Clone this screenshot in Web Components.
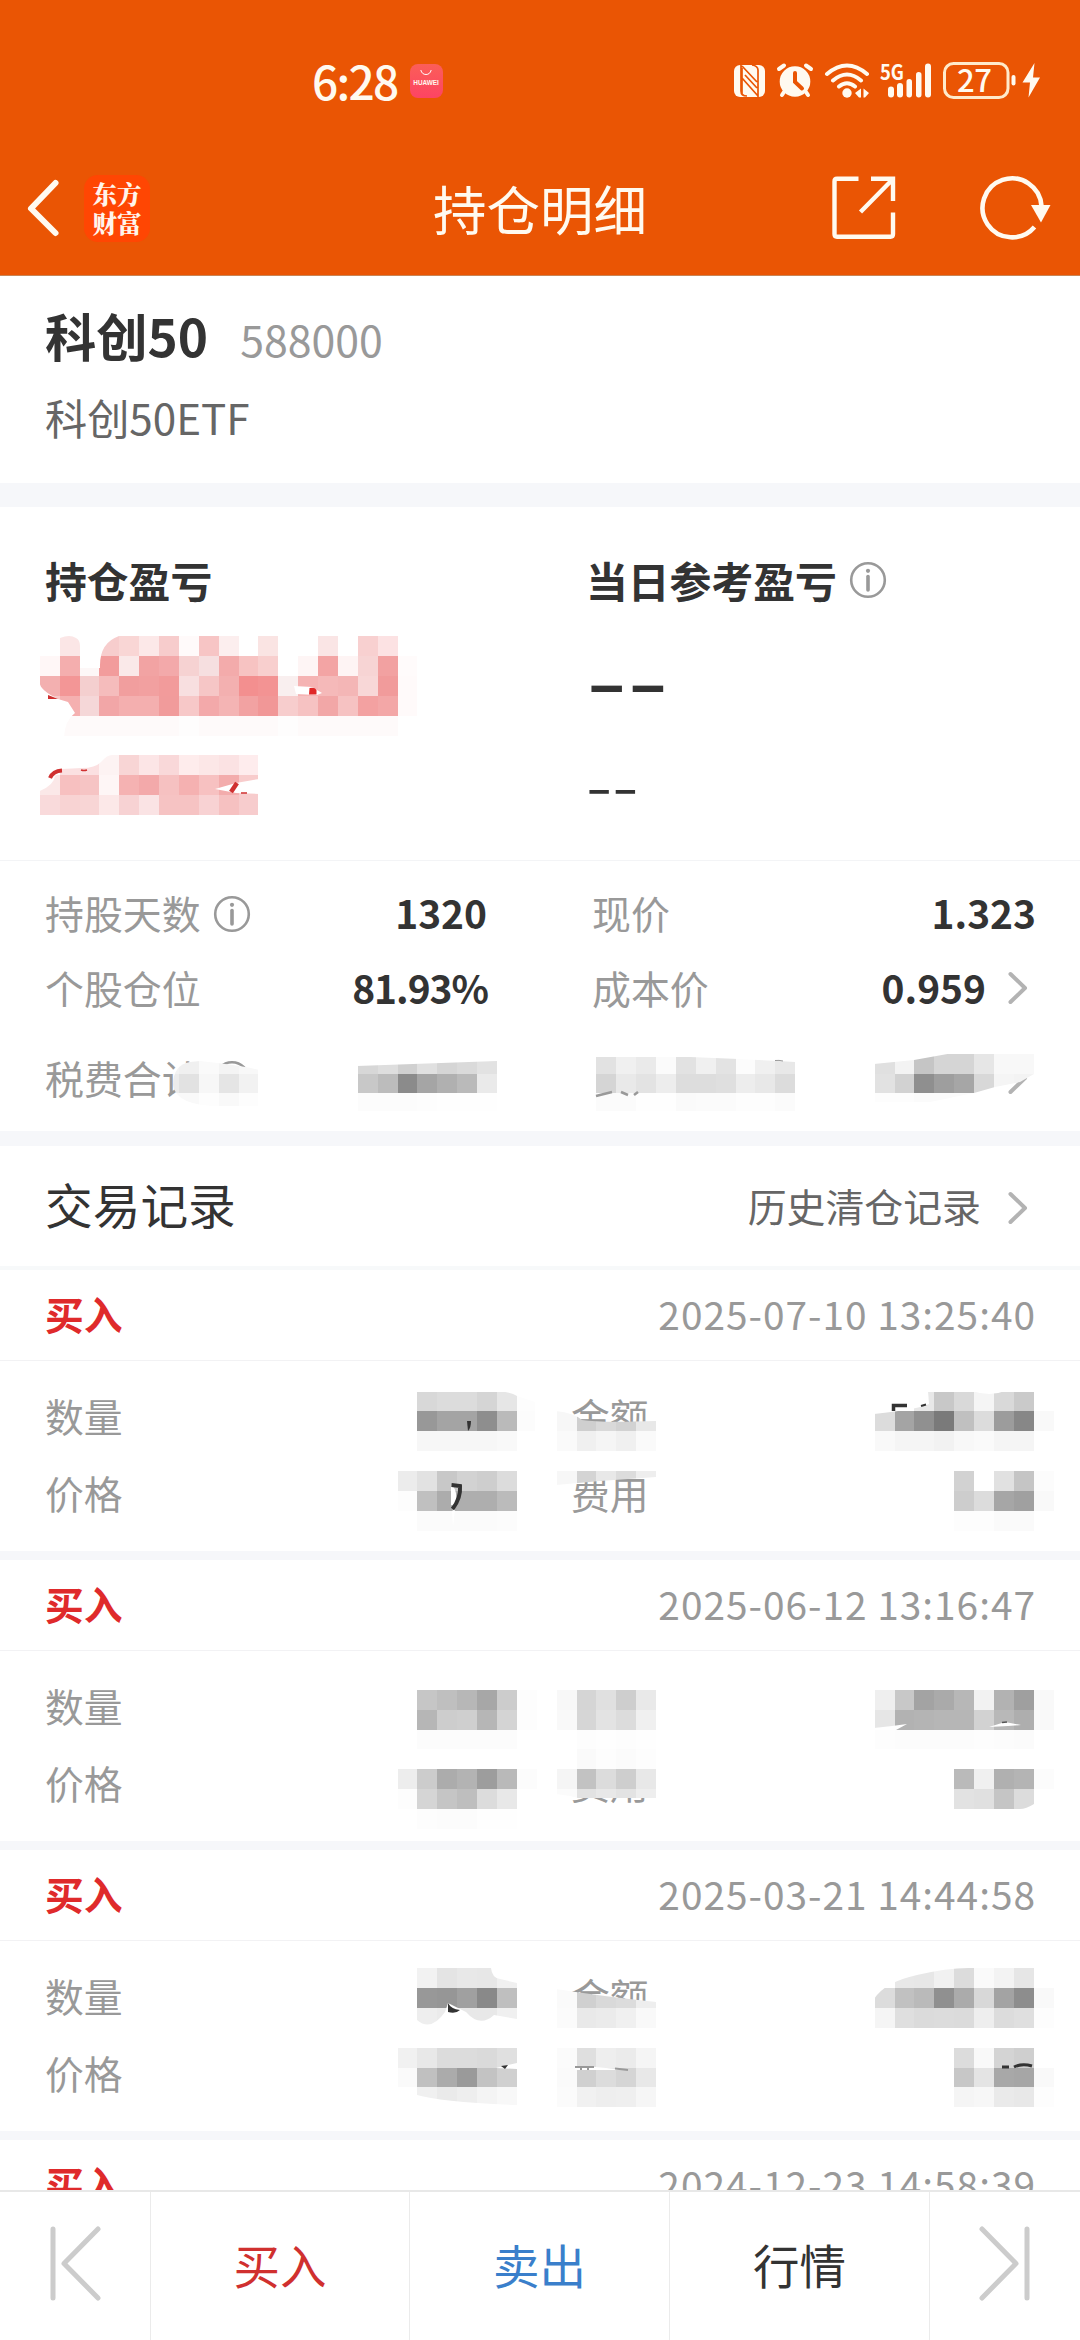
<!DOCTYPE html>
<html lang="zh-CN">
<head>
<meta charset="utf-8">
<title>持仓明细</title>
<style>
  html, body{
    margin: 0;
    background: #fff;
    font-family: "Noto Sans CJK SC", sans-serif;
  }
</style>
</head>
<body>
<position-page></position-page>

<script>
const define = (name, html, setup) => {
  const template = document.createElement('template')
  template.innerHTML = html

  window.customElements.define(name, class extends HTMLElement {
    constructor(){
      super()
      this.attachShadow({mode: 'open'}).appendChild(template.content.cloneNode(true))
    }

    connectedCallback(){
      if (setup) setup(this, this.shadowRoot)
    }
  })
}

define('info-icon', `
  <style>
    :host{ display: block; flex: none; width: 38px; height: 38px; }
    svg{ display: block; }
  </style>
  <svg width="38" height="38" fill="none" stroke="#999" stroke-width="2.6">
    <circle cx="19" cy="19" r="16.8"/>
    <path d="M19 15.5V29" stroke-width="3.6" stroke-linecap="round"/>
    <circle cx="19" cy="9.8" r="2.1" fill="#999" stroke="none"/>
  </svg>
`)

define('more-arrow', `
  <style>
    :host{ display: block; flex: none; width: 20px; height: 36px; }
    svg{ display: block; }
  </style>
  <svg width="20" height="36" fill="none" stroke="#b3b3b3" stroke-width="4" stroke-linecap="round" stroke-linejoin="round">
    <path d="M2.5 4L17 18L2.5 32"/>
  </svg>
`)

define('status-bar', `
  <style>
    :host{ display: flex; align-items: center; height: 110px; padding: 50px 37px 0 312px; box-sizing: border-box; color: #fffaf0; }
    .time{ font-size: 46px; font-weight: 500; line-height: 62px; letter-spacing: -1.7px; height: 62px; }
    .badge{
      display: flex; flex-direction: column; align-items: center;
      width: 33px; height: 34px; margin: 1px 0 0 12px; border-radius: 8px;
      background: linear-gradient(#fb5e58, #fd4463);
      font: bold 6.4px/8px "Liberation Sans", sans-serif;
    }
    .badge svg{ margin: 5px 0 3px; }
    .icons{ margin-left: auto; }
    .icons text{ font-family: "Noto Sans CJK SC", sans-serif; }
  </style>
  <span class="time">6:28</span>
  <span class="badge">
    <svg width="12" height="7" fill="none" stroke="#fff"><path d="M.8 1Q2 5.5 6 5.5T11.2 1"/></svg>
    HUAWEI
  </span>
  <svg class="icons" width="312" height="44" viewBox="730 58 312 44" fill="#fffaf0" stroke="none">
    <rect x="733" y="65" width="31" height="32" rx="6"/>
    <g stroke="#ea5504" fill="none" stroke-width="1.7">
      <path d="M740 64V91Q740 96 746 96M757 98V70Q757 66 751 65M741 66L756 82M741 78L757 96M741 68V94M744 75L756 88"/>
    </g>
    <circle cx="794" cy="81.500" r="15.300"/>
    <g stroke="#fffaf0" stroke-width="4" stroke-linecap="round" fill="none">
      <path d="M778 69L783 65.500M810 69L805 65.500M783 92L781 95M805 92L807 95"/>
    </g>
    <path d="M794 73V82L801 88.500" fill="none" stroke="#ea5504" stroke-width="4" stroke-linecap="round"/>
    <g fill="none" stroke="#fffaf0" stroke-width="4" stroke-linecap="round">
      <path d="M826 74Q846 57 866 74M832 80.500Q846 68.500 860 80.500M838 86.500Q846 80 854 86.500"/>
    </g>
    <circle cx="846" cy="93" r="4.700"/>
    <path d="M860 88.500V97.500H858L854 93ZM862.500 88.500L868 93L864 97.500H862.500Z"/>
    <text x="879" y="80" font-size="21" font-weight="700" textLength="24" lengthAdjust="spacingAndGlyphs">5G</text>
    <rect x="887" y="86.500" width="6" height="11" rx="3"/>
    <rect x="896" y="83" width="6" height="14.500" rx="3"/>
    <rect x="905.500" y="79" width="5.500" height="18.500" rx="2.700"/>
    <rect x="915" y="72" width="5.500" height="25.500" rx="2.700"/>
    <rect x="924" y="63.500" width="6" height="34" rx="3"/>
    <rect x="943.500" y="63.500" width="63.500" height="34" rx="9" fill="none" stroke="#ffeacb" stroke-width="3"/>
    <text x="956" y="91.500" font-size="31" font-weight="500" textLength="35">27</text>
    <rect x="1010.500" y="75" width="4" height="10.500" rx="2"/>
    <path d="M1033.500 63L1021.500 82.500H1029L1027.500 97.500L1039 77.500H1032Z"/>
  </svg>
`)

define('nav-bar', `
  <style>
    :host{ display: grid; grid-template-columns: 1fr auto 1fr; align-items: center; height: 165px; padding: 31px 26px 0; box-sizing: border-box; color: #fffaf0; }
    .side{ display: flex; align-items: center; }
    .side:last-child{ justify-content: flex-end; gap: 84px; }
    .app{
      box-sizing: border-box; width: 66px; height: 67px; padding-top: 4px; margin-left: 23px;
      border-radius: 14px; background: #ff4603; color: #fff5ec;
      font-weight: 900; font-size: 24.5px; line-height: 29.500px; text-align: center;
      font-family: "Noto Serif CJK SC", "Noto Sans CJK SC", sans-serif;
    }
    h1{ margin: 0; font-weight: 400; font-size: 53.5px; line-height: 70px; }
    svg{ display: block; }
  </style>
  <div class="side">
    <svg width="35" height="60" fill="none" stroke="#fffaf0" stroke-width="6" stroke-linecap="round" stroke-linejoin="round"><path d="M29.500 5L5 30.500L29.500 55"/></svg>
    <div class="app">东方<br>财富</div>
  </div>
  <h1>持仓明细</h1>
  <div class="side">
    <svg width="64" height="64" fill="none" stroke="#fffaf0" stroke-width="4.400">
      <path d="M26.500 2.700H5Q2.500 2.700 2.500 5.500V58Q2.500 60.700 5 60.700H58.500Q61 60.700 61 58V36.500M39 2.700H61V25M60 4L28.500 36"/>
    </svg>
    <svg width="74" height="66" fill="none" stroke="#fffaf0" stroke-width="4.600">
      <path d="M61.500 31A29.500 29.500 0 1 0 54.500 52"/>
      <path d="M51 30H70.500L61 47.500Z" fill="#fffaf0" stroke="none"/>
    </svg>
  </div>
`)

define('fund-title', `
  <style>
    :host{ display: block; height: 208px; padding: 30px 45px 0; box-sizing: border-box; }
    .top{ display: flex; align-items: baseline; gap: 32px; line-height: 60px; height: 60px; }
    b{ font-size: 51.300px; color: #333; }
    .code{ font-size: 42.800px; color: #999; }
    .full{ margin-top: 27px; font-size: 42.200px; line-height: 50px; color: #666; }
  </style>
  <div class="top"><b><slot></slot></b><slot class="code" name="code"></slot></div>
  <div class="full"><slot name="full"></slot></div>
`)

define('profit-summary', `
  <style>
    :host{ display: grid; grid-template-columns: 541px 1fr; align-items: start; height: 354px; padding: 48px 0 0 45px; box-sizing: border-box; border-bottom: 1px solid #f3f4f6; color: #333; }
    .title{ display: flex; align-items: center; gap: 12px; font-size: 41.800px; font-weight: 700; line-height: 50px; }
    .dash{ display: block; width: 60px; transform-origin: 0 50%; white-space: nowrap; }
    .amount{ margin-top: 35px; font-size: 60px; line-height: 80px; font-weight: 700; transform: scaleX(1.86); }
    .rate{ margin-top: 29px; font-size: 54px; line-height: 70px; transform: scaleX(1.4); }
  </style>
  <div class="title">持仓盈亏</div>
  <div>
    <div class="title">当日参考盈亏<info-icon></info-icon></div>
    <span class="dash amount">--</span>
    <span class="dash rate">--</span>
  </div>
`)

define('stat-row', `
  <style>
    :host{ display: flex; align-items: center; height: 72px; font-size: 38.900px; line-height: 60px; color: #999; }
    .label{ display: flex; align-items: center; gap: 12px; height: 60px; }
    .value{ margin-left: auto; font-weight: 700; color: #333; }
    :host([tight]) .value{ letter-spacing: -1px; margin-right: -1px; }
    info-icon{ margin-top: 3px; }
    more-arrow{ margin: 2px 8px 0 22px; }
  </style>
  <span class="label"><slot></slot></span>
  <span class="value"></span>
`, (el, root) => {
  root.querySelector('.value').textContent = el.getAttribute('value') || ''
  if (el.hasAttribute('info')) root.querySelector('.label').appendChild(document.createElement('info-icon'))
  if (el.hasAttribute('more')) root.appendChild(document.createElement('more-arrow'))
})

define('position-stats', `
  <style>
    :host{ display: grid; grid-template-columns: 442px 444px; column-gap: 105px; grid-template-rows: 72px 72px 72px; row-gap: 3px; height: 270px; padding: 15px 0 0 45px; box-sizing: border-box; }
    .last{ margin-top: 15px; }
  </style>
  <stat-row value="1320" info>持股天数</stat-row>
  <stat-row value="1.323">现价</stat-row>
  <stat-row value="81.93%" tight>个股仓位</stat-row>
  <stat-row value="0.959" more>成本价</stat-row>
  <stat-row class="last" info>税费合计</stat-row>
  <stat-row class="last" more></stat-row>
`)

define('records-head', `
  <style>
    :host{ display: flex; align-items: center; height: 124px; padding: 0 52px 4px 45px; box-sizing: border-box; border-bottom: 4px solid #f7f9fa; }
    h2{ margin: -1px 0 0; font-weight: 400; font-size: 47.700px; line-height: 70px; color: #333; }
    .history{ margin: 2px 0 0 auto; font-size: 38.900px; line-height: 60px; color: #666; }
    more-arrow{ margin: 7px 0 0 27px; }
  </style>
  <h2>交易记录</h2>
  <span class="history">历史清仓记录</span>
  <more-arrow></more-arrow>
`)

define('trade-record', `
  <style>
    :host{ display: block; height: 290px; box-sizing: border-box; border-bottom: 9px solid #f6f7fa; font-size: 38.800px; color: #999; }
    .head{ display: flex; align-items: center; justify-content: space-between; height: 91px; padding: 0 45px 4px; box-sizing: border-box; border-bottom: 1px solid #f2f2f4; }
    b{ color: #df2a2b; }
    .time{ letter-spacing: 1px; margin-right: -1px; }
    .body{ display: grid; grid-template-columns: 526px 1fr; grid-auto-rows: 77px; align-items: center; padding: 15px 45px 0; }
  </style>
  <div class="head"><b>买入</b><span class="time"><slot></slot></span></div>
  <div class="body">
    <span>数量</span><slot name="amount"><span></span></slot>
    <span>价格</span><slot name="fee"><span></span></slot>
  </div>
`)

define('trade-tabs', `
  <style>
    :host{ display: grid; grid-template-columns: 151px 259px 260px 260px 1fr; flex: none; height: 150px; box-sizing: border-box; border-top: 2px solid #e8e8e8; background: #fff; }
    div{ display: flex; align-items: center; justify-content: center; box-sizing: border-box; padding-bottom: 5px; font-size: 46.500px; line-height: 60px; color: #333; border-right: 1px solid #ebebeb; }
    div:last-child{ border: 0; }
    .buy{ color: #d0302f; }
    .sell{ color: #3a7fcb; }
  </style>
  <div><svg width="54" height="76" fill="none" stroke="#ccc" stroke-width="5" stroke-linecap="round" stroke-linejoin="round"><path d="M5 3V72M50 3L16 37.500L50 72"/></svg></div>
  <div class="buy">买入</div>
  <div class="sell">卖出</div>
  <div>行情</div>
  <div><svg width="54" height="76" fill="none" stroke="#ccc" stroke-width="5" stroke-linecap="round" stroke-linejoin="round"><path d="M49 3V72M4 3L38 37.500L4 72"/></svg></div>
`)

// mosaic patches over the private figures: [column, row, rows of colours, outline]
// a two digit colour is a grey, "-" leaves the cell white
const CELL = 19.88
const patches = [
  [2, 32, [
    '- fbe6e6 - f7cdcd f9d6d5 fce8e8 f7cccc fffafa f7c5c5 fceeee - fae4e3 - - fae5e5 - f8d0d0 fce2e3',
    'fff7f7 f4aeae fdf7f7 f29c9c fae9e9 f2a3a3 f3a9aa f6d2d2 f6dfe0 f3abab f7c3c2 f8cfce - fef5f5 f3a4a4 fef4f4 f7d4d4 f2a1a1 fffbfb',
    'f3b0b0 f39696 f4cfcf f5bcbc f19e9e f2a0a0 f29b9b f8dfe0 f6c6c6 f3b0b0 f38f8f f39393 f9efef f5b3b3 f5b9b9 f4b6b6 f8d7d7 f19b9b fffafa',
    'f8c8c8 f5b0b0 f5d7d8 f2a6a7 f4afaf f4afaf f19b9b f7c8c8 f3a9aa f4b4b4 f2a2a2 f19797 f7cdcd f6c2c2 f2a7a7 f6c2c2 f3a1a1 f3a7a7 fffafa',
    '- fefafa fefafa fefafa fefafa fefafa fefafa fefdfd fefafa fefafa fefafa fefafa fefdfd fefafa fefafa fefafa fefafa fefafa'
  ], 'M60 638Q70 634 76 638Q80 640 80 646V668H100Q99 643 119 636H420V737H64Q65 720 75 713L68 702L58 699Q40 690 39.8 683V656H60Z'],
  [2, 38, [
    '- fbe0e1 fbe0e1 fdf3f3 f8d5d5 fce5e6 f9d8d9 feecec fce7e7 fbe2e3 feeced',
    'fbe8e8 f7c0c0 f6c4c4 fef6f6 f5b2b2 f3a9aa f6c1c1 f5b1b1 f7c1c1 f3acac f8cccc',
    'f9dadb f8d3d3 f8d5d5 fce8e8 f7d2d3 fae3e4 f6c3c3 f6c3c3 f8d2d3 f6c1c1 f7cccd'
  ], 'M39.8 791Q54 785 55 776L62 769L82 768Q96 768 102 761Q107 755 112 755H259V779L236 783L215 789L236 793L259 794V816H39.8Z'],
  [8, 53, ['f3 f0 fa f4 f8', 'ec e2 f7 e5 f2', 'f9 f9 fd f9 fd'], 'M173 1085Q173 1065 190 1062L200 1061Q240 1065 259 1070V1106H220Q176 1106 173 1085Z'],
  [18, 53, ['d7 de d0 e0 d5 da e2', 'c8 bc 8b a5 b0 ba ea', 'fc fc fc fd fe fe fe'], 'M357 1066L497 1061V1111H357Z'],
  [30, 53, ['e2 f0 ea fb e2 f0 e3 fc f0 e8', 'd5 e9 e3 ed dd dd df ed e8 dc', 'fb fb fe fe fa fb fb fd fd fb'], 'M596 1057H690Q740 1059 795 1062V1111H596Z'],
  [44, 53, ['e0 f3 c5 d5 d5 e6 f8 f8', 'e2 d2 8f 9e a6 d8 f5 f3', 'fd fd fb fb fb'], 'M874 1064L914 1060L953 1053H1034V1074L1020 1082L995 1087L974 1093L930 1102H874Z'],

  [21, 70, ['d8 dc dc d5 e6 fd', '98 a4 a4 8e ba fc', 'f7 f7 f7 f7 f9'], 'M417 1391H497Q511 1392 517 1396L535 1402V1452H417Z'],
  [28, 71, ['f7 cf d9 d2 e8', 'fa f0 f5 f0 fa'], 'M556 1411Q574 1413 582 1420Q600 1423 656 1421V1452H556Z'],
  [44, 70, ['- - e8 c8 d9 f5 d9 ca', 'dc a4 90 7a c0 dc 9c 87 f9', 'f9 f5 f5 f2 f8 fa f5 f5'], 'M874 1414Q920 1409 929 1404L928 1391H972Q990 1397 1005 1391H1034L1054 1400V1452H874Z'],
  [20, 74, ['ec e2 c8 d2 ce dc', 'fd c0 ac ae ae bb', '- fb fb fb fb fc']],
  [28, 74, ['f7 d4 e8 dc ee'], 'M556 1471H656V1477L600 1481L556 1485Z'],
  [48, 74, ['d2 - e1 c5 fc', 'cd dc a6 a0 f9', 'fd fd fa fa']],

  [21, 85, ['c6 bf b7 a7 cc fd', 'b6 cd cf b6 d4 fd', 'fc fc fc fc fc']],
  [28, 85, ['f8 d5 e0 ce e9', 'f9 d6 e3 dc f0', '- fd fe fd fe']],
  [44, 85, ['ef c8 a3 aa b7 f2 b2 9f f9', 'e6 b2 b4 b6 b6 d2 b8 ae f9', 'fd fc fc fc fc fd fc fb']],
  [20, 89, ['ed cc ac b3 9d b9 fc', 'fd d5 c5 be dc e8', '- fd fc fc fe fe']],
  [28, 88, ['- fa fd fb fd', 'f5 c2 dc ce e8', 'fb e2 e8 e3 ee'], 'M556 1749H656V1798H578L570 1796L556 1794Z'],
  [48, 89, ['ba f0 b0 b4 fc', 'e2 e0 c5 dc'], 'M954 1769H1054V1789L1034 1804Q1026 1809 1020 1809H954Z'],

  [21, 99, ['f2 e4 e8 e7 f0', '98 96 a0 89 bf fd', 'ee eb e8 e8 f0'], 'M417 1968H491Q492 1978 500 1979L517 1983V2019L494 2015Q480 2028 466 2012L448 2003L445 2012Q431 2032 417 2020Z'],
  [28, 100, ['fa d0 d9 dc ee', 'fb e9 eb f0 f9'], 'M556 1989Q600 1996 656 2002V2028H556Z'],
  [44, 99, ['- e8 e7 f1 dc fa f3 e6', 'dc c1 ba 90 ab d8 a3 8d f9', 'f5 df db dc db ee dc df fd'], 'M874 1999Q885 1982 917 1975Q950 1967 974 1968H1054V2028H874Z'],
  [20, 103, ['f1 e8 dc dc da e0', 'fa c0 ab 9a c3 d0', '- f0 ea ee f4 f8'], 'M397 2047H517V2063L504 2066L496 2068L517 2069V2105Q440 2102 417 2095V2087H397Z'],
  [28, 103, ['fb df ee eb f5', 'fa d0 dc d5 e8', 'fb f1 ee ef f6']],
  [48, 103, ['dc f9 d4 cf', 'c7 e4 a8 a6 f9', 'f5 f7 ea e8 fd']]
]

define('mosaic-cover', `
  <style>
    :host{ display: block; position: absolute; inset: 0; pointer-events: none; }
    svg{ display: block; }
  </style>
  <svg width="1080" height="2190" viewBox="0 0 1080 2190">
    <defs></defs>
    <g class="cells" shape-rendering="crispEdges"></g>
    <g class="scraps" fill="none" stroke="#333">
      <path d="M294 686L312 687L322 693L317 695L296 694Z" fill="#fff" stroke="none"/>
      <path d="M309.500 688Q315 687 316.500 690V694.500H309Z" fill="#e02828" stroke="none"/>
      <path d="M48 695L58 699H48Z" fill="#cf3030" stroke="none"/>
      <path d="M50 778Q53 771 62 770.500" stroke="#d03030" stroke-width="4"/>
      <path d="M81 770Q84 771 87 770M241 793H247" stroke="#d03030" stroke-width="1.500"/>
      <path d="M231 792L237 783" stroke="#d03030" stroke-width="4.500"/>
      <path d="M596 1096L612 1092M621 1092L628 1095M634 1095L638 1092" stroke="#999" stroke-width="2.500"/>
      <path d="M775 1060.500Q779 1060 783 1061" stroke="#999"/>
      <path d="M467 1421H471Q471 1428 468 1431Z" fill="#333" stroke="none"/>
      <path d="M893.500 1411V1405.500H907" stroke-width="3.500"/>
      <path d="M921 1406L926 1404.500" stroke-width="2"/>
      <path d="M451 1485Q457 1488 456 1500Q455 1507 451 1505ZM452 1511L455 1509L453 1527Z" fill="#fff" stroke="none"/>
      <path d="M451.500 1485L460 1486Q461 1498 452.500 1509" stroke-width="4"/>
      <path d="M874 1728L892 1726L907 1724L896 1730H874ZM989 1727L1005 1722L1021 1725L1008 1726Z" fill="#fff" stroke="none"/>
      <path d="M1002 1722.500L1007 1722" stroke="#555" stroke-width="1.500"/>
      <path d="M448 2003V2012Q456 2014 460 2010Q451 2009 448 2003Z" fill="#333" stroke="none"/>
      <path d="M501 2066L508 2065L505 2069Z" fill="#333" stroke="none"/>
      <path d="M575 2067H595L628 2070H575Z" fill="#fff" stroke="none"/>
      <path d="M575 2067H594M581 2066V2070M588 2066V2070M615 2068.500L628 2070" stroke="#999" stroke-width="2"/>
      <path d="M1002 2067H1009M1014 2067Q1022 2063 1032 2066" stroke-width="3"/>
    </g>
  </svg>
`, (el, root) => {
  let clips = ''
  let cells = ''
  patches.forEach(([col, row, lines, outline], i) => {
    if (outline) clips += `<clipPath id="p${i}"><path d="${outline}"/></clipPath>`
    cells += `<g${outline ? ` clip-path="url(#p${i})"` : ''}>`
    lines.forEach((line, y) => line.split(' ').forEach((c, x) => {
      const fill = c === '-' ? 'fff' : c.length === 2 ? c + c + c : c
      const x1 = Math.round((col + x) * CELL)
      const y1 = Math.round((row + y) * CELL)
      const x2 = Math.round((col + x + 1) * CELL)
      const y2 = Math.round((row + y + 1) * CELL)
      cells += `<rect x="${x1}" y="${y1}" width="${x2 - x1}" height="${y2 - y1}" fill="#${fill}"/>`
    }))
    cells += '</g>'
  })
  root.querySelector('defs').innerHTML = clips
  root.querySelector('.cells').innerHTML = cells
})

define('position-page', `
  <style>
    :host{ display: flex; flex-direction: column; position: relative; width: 1080px; height: 2340px; overflow: hidden; background: #fff; }
    header{ flex: none; height: 276px; background: #ea5504; border-bottom: 1px solid #c98555; box-sizing: border-box; }
    main{ flex: 1; min-height: 0; overflow: hidden; }
    fund-title{ margin-top: -1px; }
    .gap{ height: 24px; background: #f6f7fa; }
    .gap.thin{ height: 15px; }
  </style>
  <header>
    <status-bar></status-bar>
    <nav-bar></nav-bar>
  </header>
  <main>
    <fund-title>科创50<span slot="code">588000</span><span slot="full">科创50ETF</span></fund-title>
    <div class="gap"></div>
    <profit-summary></profit-summary>
    <position-stats></position-stats>
    <div class="gap thin"></div>
    <records-head></records-head>
    <trade-record>2025-07-10 13:25:40<span slot="amount">金额</span><span slot="fee">费用</span></trade-record>
    <trade-record>2025-06-12 13:16:47<span slot="fee">费用</span></trade-record>
    <trade-record>2025-03-21 14:44:58<span slot="amount">金额</span></trade-record>
    <trade-record>2024-12-23 14:58:39</trade-record>
  </main>
  <mosaic-cover></mosaic-cover>
  <trade-tabs></trade-tabs>
`)
</script>
</body>
</html>
